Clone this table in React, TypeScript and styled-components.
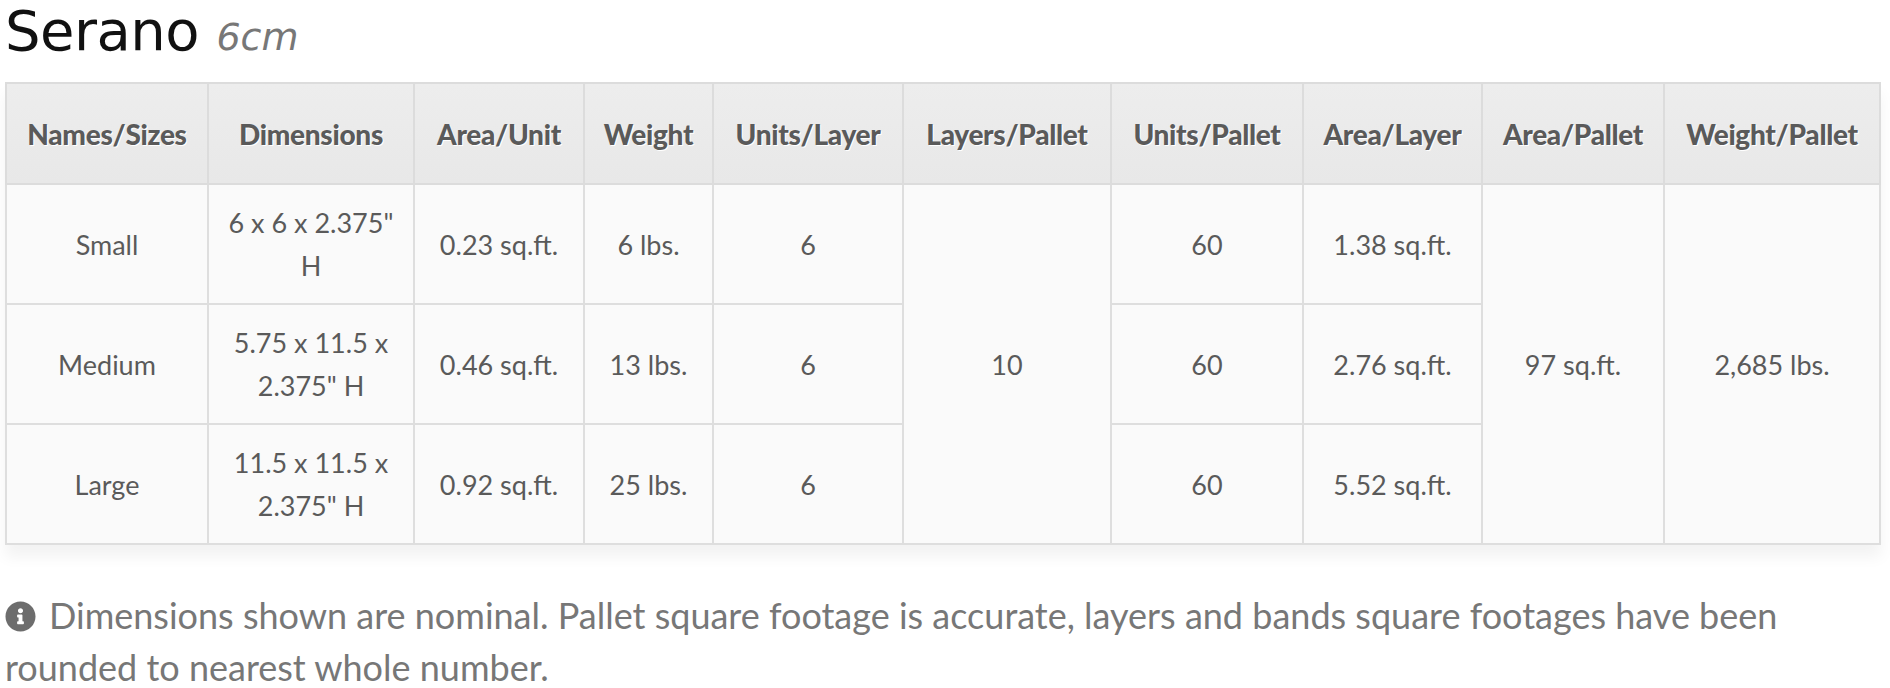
import styled, { createGlobalStyle } from "styled-components";
import { FaInfoCircle } from "react-icons/fa";

const GlobalStyle = createGlobalStyle`
  body {
    margin: 0;
    background: #fff;
  }
`;

const Page = styled.div`
  padding: 0 11px 0 5px;
`;

const Title = styled.h2`
  margin: 0;
  padding-top: 1px;
  height: 81px;
  font-family: "DejaVu Sans", sans-serif;
  font-weight: normal;
  font-size: 56px;
  line-height: 60px;
  color: #111;
  letter-spacing: -0.5px;
`;

const Thickness = styled.small`
  font-size: 38px;
  font-style: italic;
  color: #777;
  letter-spacing: 0;
`;

const SpecTable = styled.table`
  width: 100%;
  border-collapse: collapse;
  table-layout: fixed;
  background: #fafafa;
  font-family: Lato, "Noto Sans", sans-serif;
  box-shadow: 0 12px 14px rgba(0, 0, 0, 0.05);
  border: 2px solid #dcdcdc;
`;

const Col = styled.col<{ $w: number }>`
  width: ${(p) => p.$w}px;
`;

const HeadCell = styled.th`
  height: 99px;
  padding: 0 4px;
  background: linear-gradient(#ededed, #e8e8e8);
  border: 2px solid #dcdcdc;
  color: #5a5a5a;
  font-size: 28px;
  font-weight: 900;
  letter-spacing: -0.3px;
  text-shadow: 1px 1px 0 #fff;
  white-space: nowrap;
`;

const Cell = styled.td`
  height: 118px;
  padding: 0 6px;
  border: 2px solid #dedede;
  color: #5a5a5a;
  font-size: 27px;
  line-height: 43px;
  text-align: center;
  white-space: nowrap;
`;

const Note = styled.p`
  margin: 44px 0 0 0;
  font-family: Lato, sans-serif;
  font-size: 36px;
  line-height: 52px;
  color: #777;
  svg {
    vertical-align: -3px;
    margin-right: 13px;
    color: #6d6d6d;
  }
`;

const widths = [202, 206, 170, 129, 190, 208, 192, 179, 182, 216];
const headers = [
  "Names/Sizes",
  "Dimensions",
  "Area/Unit",
  "Weight",
  "Units/Layer",
  "Layers/Pallet",
  "Units/Pallet",
  "Area/Layer",
  "Area/Pallet",
  "Weight/Pallet",
];

const sizes = [
  { name: "Small", dim: ["6 x 6 x 2.375\"", "H"], area: "0.23 sq.ft.", weight: "6 lbs.", layerArea: "1.38 sq.ft." },
  { name: "Medium", dim: ["5.75 x 11.5 x", "2.375\" H"], area: "0.46 sq.ft.", weight: "13 lbs.", layerArea: "2.76 sq.ft." },
  { name: "Large", dim: ["11.5 x 11.5 x", "2.375\" H"], area: "0.92 sq.ft.", weight: "25 lbs.", layerArea: "5.52 sq.ft." },
];

export default function App() {
  return (
    <Page>
      <GlobalStyle />
      <Title>
        Serano <Thickness>6cm</Thickness>
      </Title>
      <SpecTable>
        <colgroup>
          {widths.map((w, i) => (
            <Col key={i} $w={w} />
          ))}
        </colgroup>
        <thead>
          <tr>
            {headers.map((h) => (
              <HeadCell key={h}>{h}</HeadCell>
            ))}
          </tr>
        </thead>
        <tbody>
          {sizes.map((s, i) => (
            <tr key={s.name}>
              <Cell>{s.name}</Cell>
              <Cell>
                {s.dim[0]}
                <br />
                {s.dim[1]}
              </Cell>
              <Cell>{s.area}</Cell>
              <Cell>{s.weight}</Cell>
              <Cell>6</Cell>
              {i === 0 && <Cell rowSpan={3}>10</Cell>}
              <Cell>60</Cell>
              <Cell>{s.layerArea}</Cell>
              {i === 0 && <Cell rowSpan={3}>97 sq.ft.</Cell>}
              {i === 0 && <Cell rowSpan={3}>2,685 lbs.</Cell>}
            </tr>
          ))}
        </tbody>
      </SpecTable>
      <Note>
        <FaInfoCircle size={31} />
        Dimensions shown are nominal. Pallet square footage is accurate, layers and bands square footages have been
        rounded to nearest whole number.
      </Note>
    </Page>
  );
}
